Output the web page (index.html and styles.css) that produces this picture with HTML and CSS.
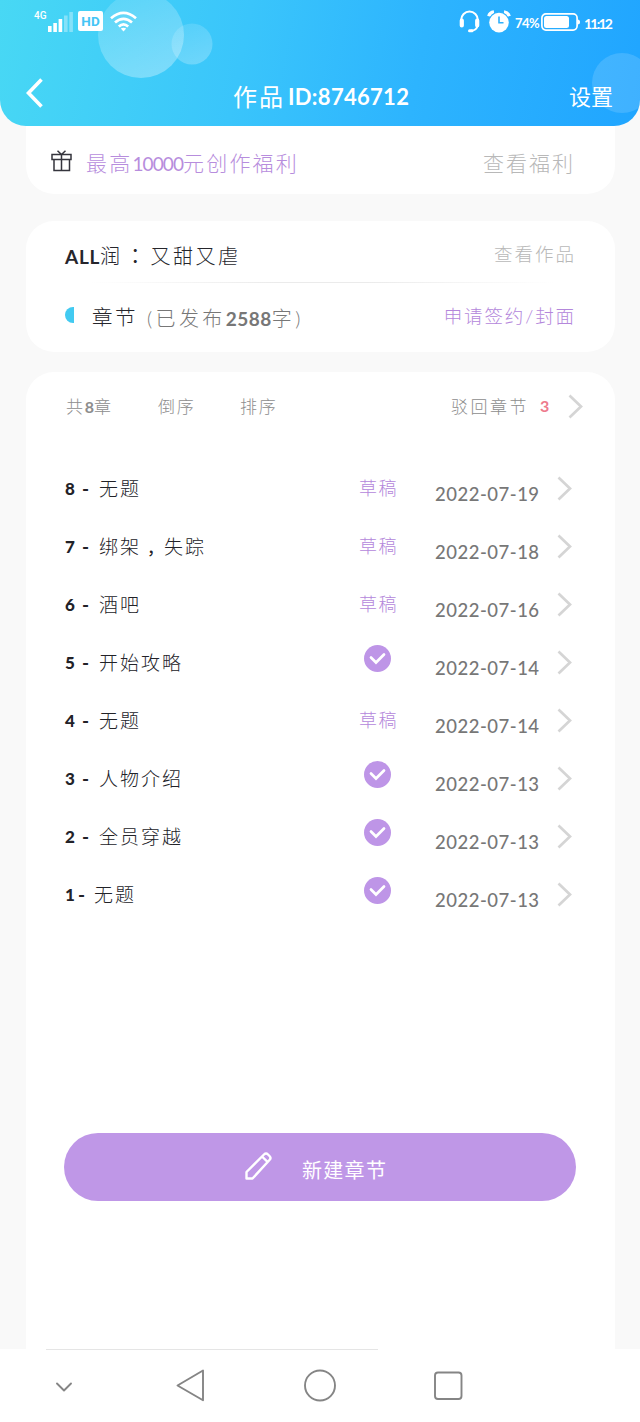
FILE: index.html
```html
<!DOCTYPE html>
<html lang="zh-CN">
<head>
<meta charset="utf-8">
<title>作品</title>
<link rel="stylesheet" href="styles.css">
</head>
<body>
<div class="screen">
  <header class="header">
    <svg class="bubbles" width="640" height="126" viewBox="0 0 640 126">
      <defs>
        <linearGradient id="bubble" x1="0.2" y1="0" x2="0.6" y2="1">
          <stop offset="0" stop-color="#fff" stop-opacity=".13"/>
          <stop offset="1" stop-color="#fff" stop-opacity=".32"/>
        </linearGradient>
        <linearGradient id="bubbleSoft" x1="0.2" y1="0" x2="0.6" y2="1">
          <stop offset="0" stop-color="#fff" stop-opacity=".12"/>
          <stop offset="1" stop-color="#fff" stop-opacity=".25"/>
        </linearGradient>
      </defs>
      <circle cx="141" cy="35" r="43" fill="url(#bubble)"/>
      <circle cx="192" cy="44" r="20.5" fill="url(#bubbleSoft)"/>
      <circle cx="622" cy="83" r="30" fill="#fff" fill-opacity=".14"/>
    </svg>
    <div class="status">
      <div class="status-left">
        <span class="net">4G</span>
        <svg class="signal" width="25" height="20" viewBox="0 0 25 20" fill="#fff">
          <rect x="0" y="14" width="3.6" height="6"/><rect x="5.3" y="11" width="3.6" height="9"/><rect x="10.6" y="7" width="3.6" height="13"/>
          <rect x="16" y="3.5" width="3.6" height="16.5" opacity=".35"/><rect x="21.3" y="0" width="3.6" height="20" opacity=".35"/>
        </svg>
        <span class="hd">HD</span>
        <svg class="wifi" width="27" height="21" viewBox="0 0 27 21" fill="none" stroke="#fff" stroke-width="2.7">
          <path d="M1 7.2Q13.5-3.6 26 7.2M5 11.6Q13.5 4 22 11.6M8.8 15.6Q13.5 11.3 18.2 15.6"/>
          <path d="M10.8 17.6Q13.5 15.8 16.2 17.6L13.5 20.6z" fill="#fff" stroke="none"/>
        </svg>
      </div>
      <div class="status-right">
        <svg width="21" height="23" viewBox="0 0 21 23" fill="none" stroke="#fff" stroke-width="2">
          <path d="M2.2 13V9.8a8.3 8.3 0 0 1 16.6 0V13M18.6 15c-.3 3.4-2.6 5.4-6.6 5.8"/>
          <path d="M2.8 10.5v5M18.2 10.5v5" stroke-width="4.2" stroke-linecap="round"/>
          <path d="M10.5 20.8h2.5" stroke-width="3" stroke-linecap="round"/>
        </svg>
        <svg class="alarm" width="24" height="23" viewBox="0 0 24 23">
          <path d="M1.8 6.2Q2.8 2.6 7 2M22.2 6.2Q21.2 2.6 17 2" stroke="#fff" stroke-width="3.4" fill="none"/>
          <circle cx="12" cy="12.3" r="10.6" fill="#2fb2fd"/>
          <circle cx="12" cy="12.6" r="9.8" fill="#fff"/>
          <path d="M12 6.5v6.3h4.5" fill="none" stroke="#2fb0fc" stroke-width="1.6"/>
        </svg>
        <span class="percent">74%</span>
        <svg class="battery" width="39" height="18" viewBox="0 0 39 18">
          <rect x=".9" y=".9" width="35.2" height="16.2" rx="4" fill="none" stroke="#fff" stroke-width="1.7"/>
          <rect x="3" y="3" width="25" height="12" rx="2.5" fill="#fff"/>
          <path d="M36.5 6.5q2.5 0 2.5 2.5t-2.5 2.5z" fill="#fff"/>
        </svg>
        <span class="clock">11:12</span>
      </div>
    </div>
    <div class="titlebar">
      <svg width="17" height="30" viewBox="0 0 17 30" fill="none" stroke="#fff" stroke-width="3.6"><path d="M15.5 1.5L2.5 15l13 13.5"/></svg>
      <h1 class="title"><span class="title-cn">作品</span><span class="title-id">ID:8746712</span></h1>
      <span class="settings">设置</span>
    </div>
  </header>

  <section class="card benefit">
    <svg class="gift" width="21" height="22" viewBox="0 0 21 22" fill="none" stroke="#35353d" stroke-width="1.5">
      <path d="M1 4.5h19v5H1zM3 9.5h15.5v11H3zM10.5 4.5v16M6.5.8l4 3.7 4-3.7"/>
    </svg>
    <span class="benefit-text">最高<span class="n">10000</span>元创作福利</span>
    <span class="benefit-link">查看福利</span>
  </section>

  <section class="card work">
    <div class="work-row">
      <span class="work-name"><span class="n">ALL</span>润<span class="colon">：</span>又甜又虐</span>
      <span class="work-link">查看作品</span>
    </div>
    <div class="divider"></div>
    <div class="work-row chapters">
      <span class="half"></span>
      <span class="chapter-label">章节</span>
      <span class="chapter-info">(已发布<span class="n">2588</span>字)</span>
      <span class="apply">申请签约/封面</span>
    </div>
  </section>

  <section class="card list">
    <div class="tools">
      <span class="total">共<b>8</b>章</span>
      <span class="reverse">倒序</span>
      <span class="sort">排序</span>
      <span class="rejected">驳回章节</span>
      <b class="rejected-count">3</b>
      <svg class="more" width="15" height="25" viewBox="0 0 15 25"><path d="M1.5 1.5l11.5 11-11.5 11"/></svg>
    </div>
    <div class="rows">
      <div class="row"><span class="name"><b>8</b><i>-</i>无题</span><span class="state">草稿</span><time>2022-07-19</time><svg class="go" viewBox="0 0 15 25"><path d="M1.5 1.5l11.5 11-11.5 11"/></svg></div>
      <div class="row"><span class="name"><b>7</b><i>-</i>绑架<span class="comma">，</span>失踪</span><span class="state">草稿</span><time>2022-07-18</time><svg class="go" viewBox="0 0 15 25"><path d="M1.5 1.5l11.5 11-11.5 11"/></svg></div>
      <div class="row"><span class="name"><b>6</b><i>-</i>酒吧</span><span class="state">草稿</span><time>2022-07-16</time><svg class="go" viewBox="0 0 15 25"><path d="M1.5 1.5l11.5 11-11.5 11"/></svg></div>
      <div class="row"><span class="name"><b>5</b><i>-</i>开始攻略</span><span class="state"><svg class="done" viewBox="0 0 27 27"><circle cx="13.5" cy="13.5" r="13.5"/><path d="M7 12.5l5 5 8-8"/></svg></span><time>2022-07-14</time><svg class="go" viewBox="0 0 15 25"><path d="M1.5 1.5l11.5 11-11.5 11"/></svg></div>
      <div class="row"><span class="name"><b>4</b><i>-</i>无题</span><span class="state">草稿</span><time>2022-07-14</time><svg class="go" viewBox="0 0 15 25"><path d="M1.5 1.5l11.5 11-11.5 11"/></svg></div>
      <div class="row"><span class="name"><b>3</b><i>-</i>人物介绍</span><span class="state"><svg class="done" viewBox="0 0 27 27"><circle cx="13.5" cy="13.5" r="13.5"/><path d="M7 12.5l5 5 8-8"/></svg></span><time>2022-07-13</time><svg class="go" viewBox="0 0 15 25"><path d="M1.5 1.5l11.5 11-11.5 11"/></svg></div>
      <div class="row"><span class="name"><b>2</b><i>-</i>全员穿越</span><span class="state"><svg class="done" viewBox="0 0 27 27"><circle cx="13.5" cy="13.5" r="13.5"/><path d="M7 12.5l5 5 8-8"/></svg></span><time>2022-07-13</time><svg class="go" viewBox="0 0 15 25"><path d="M1.5 1.5l11.5 11-11.5 11"/></svg></div>
      <div class="row"><span class="name"><b class="one">1</b><i>-</i>无题</span><span class="state"><svg class="done" viewBox="0 0 27 27"><circle cx="13.5" cy="13.5" r="13.5"/><path d="M7 12.5l5 5 8-8"/></svg></span><time>2022-07-13</time><svg class="go" viewBox="0 0 15 25"><path d="M1.5 1.5l11.5 11-11.5 11"/></svg></div>
    </div>
    <div class="create">
      <svg width="27" height="28" viewBox="0 0 27 28" fill="none" stroke="#fff" stroke-width="2.4" stroke-linejoin="round">
        <path d="M1.5 26.5V20L19 2.5q2-2 4 0l1.5 1.5q2 2 0 4L7.5 26.5zM17 4.5l6 5.8"/>
      </svg>
      <span class="create-text">新建章节</span>
    </div>
  </section>

  <nav class="nav">
    <div class="nav-line"></div>
    <svg width="640" height="72" viewBox="0 0 640 72" fill="none" stroke="#858585" stroke-width="1.9" stroke-linejoin="round" stroke-linecap="round">
      <path d="M57 33.5l7 7 7-7"/>
      <path d="M177.500 35.500L203 20.500v29.800z"/>
      <circle cx="320" cy="35.5" r="15"/>
      <rect x="435" y="22.5" width="26.5" height="26.5" rx="3"/>
    </svg>
  </nav>
</div>
</body>
</html>
```

FILE: styles.css
```css
* { box-sizing: border-box; }
body { margin: 0; font-family: Lato, "Noto Sans CJK SC", sans-serif; font-weight: 300; line-height: 1; white-space: nowrap; }
svg { display: block; flex: none; }
i { font-style: normal; }
.screen { width: 640px; height: 1422px; background: #f9f9f9; display: flex; flex-direction: column; overflow: hidden; }

.header { position: relative; height: 126px; flex: none; border-radius: 0 0 26px 26px; overflow: hidden; color: #fff; background: linear-gradient(101deg, #48d8f4 0%, #3ac5fb 38%, #2db4fe 65%, #20a5ff 100%); }
.bubbles { position: absolute; left: 0; top: 0; }
.status { position: relative; height: 44px; display: flex; justify-content: space-between; padding: 0 28px 0 34px; }
.status-left { display: flex; align-items: flex-start; padding-top: 11px; }
.net { font: 500 10px/10px Roboto, sans-serif; width: 14px; }
.signal { margin-top: 1px; }
.hd { margin: 0 7px 0 5px; width: 25px; height: 20px; border-radius: 2px; background: #fff; color: #45c5f5; font: bold 13.5px/20px Roboto, sans-serif; text-align: center; }
.status-right { display: flex; align-items: center; padding-bottom: 1px; }
.alarm { margin-left: 7px; }
.percent { width: 27px; margin-left: 4px; padding-top: 4px; font-size: 13px; font-weight: 700; letter-spacing: -.6px; }
.battery { margin-left: -1px; }
.clock { width: 28px; margin-left: 4px; padding-top: 4px; font-size: 14px; font-weight: 700; letter-spacing: -1.8px; }
.titlebar { position: relative; height: 60px; display: flex; align-items: center; padding: 0 26px; margin-top: 18px; }
.titlebar > svg { margin-top: 2px; }
.title { margin: 10px 0 0 190px; width: 336px; display: flex; align-items: center; font-size: 24px; font-weight: 400; }
.title-cn { width: 55px; letter-spacing: 2px; }
.title-id { font-weight: 700; font-size: 22px; letter-spacing: .3px; }
.settings { font-size: 22px; margin: 9px 0 0 0; font-weight: 400; }

.card { background: #fff; margin: 0 25px 0 26px; flex: none; }
.benefit { height: 68px; border-radius: 0 0 28px 28px; display: flex; align-items: center; padding: 5px 40px 0 25px; }
.gift { margin-top: -4px; }
.benefit-text { margin: 0 auto 0 14px; font-size: 21px; letter-spacing: 2.2px; color: #b78ddd; }
.benefit-text .n { font-size: 19px; font-weight: 400; letter-spacing: -.9px; }
.benefit-link { font-size: 21px; letter-spacing: 2px; color: #b8b8b8; }

.work { margin-top: 27px; height: 131px; border-radius: 28px; }
.work-row { height: 61px; display: flex; align-items: center; padding: 8px 40px 0 39px; }
.work-name { margin-right: auto; font-size: 20px; letter-spacing: 2.5px; color: #26262c; }
.work-name .n { font-size: 19px; font-weight: 700; letter-spacing: .7px; }
.colon { display: inline-block; width: 28px; text-align: center; font-family: "Noto Sans CJK TC", sans-serif; font-weight: 400; }
.work-link { font-size: 18.5px; letter-spacing: 2px; margin: -3px -1px 0 0; color: #b8b8b8; }
.divider { height: 1px; margin: 0 60px 0 64px; background: linear-gradient(90deg, transparent, #ebebeb 40%, #ebebeb 60%, transparent); }
.half { width: 9px; height: 16px; margin: -6px 18px 0 0; border-radius: 9px 0 0 9px; background: #42caf1; }
.chapter-label { font-size: 20.5px; letter-spacing: 2.5px; color: #26262c; width: 55px; }
.chapter-info { font-size: 20px; letter-spacing: 3.4px; color: #777; margin-right: auto; }
.chapter-info .n { font-size: 19px; font-weight: 700; letter-spacing: .5px; }
.apply { font-size: 18.5px; letter-spacing: 1.9px; margin: -2px -1px 0 0; color: #b487db; }

.list { margin-top: 20px; height: 977px; border-radius: 28px 28px 0 0; }
.tools { height: 68px; display: flex; align-items: center; padding-left: 40px; font-size: 17px; letter-spacing: 1.7px; color: #8d8d8d; }
.tools b { font-weight: 700; letter-spacing: 0; font-size: 16px; }
.total { width: 92px; }
.reverse { width: 82px; }
.sort { width: 211px; }
.rejected { width: 89px; letter-spacing: 2.5px; }
.tools .rejected-count { width: 28px; color: #ee7b8d; }
.more path, .go path { fill: none; stroke: #d5d5d5; stroke-width: 2.7; }
.rows { margin-top: 19px; }
.row { height: 58px; display: flex; align-items: center; padding-left: 39px; color: #222228; }
.name { width: 287px; display: flex; align-items: center; font-size: 19px; letter-spacing: 2px; padding-top: 1px; }
.name b { width: 17px; font-size: 17px; font-weight: 900; letter-spacing: 0; }
.name .one { width: 13px; }
.name i { width: 17px; font-size: 19px; font-weight: 700; letter-spacing: 0; }
.name .one + i { width: 16px; }
.comma { width: 23px; padding: 3px 0 0 6px; font-size: 16px; font-weight: 500; letter-spacing: 0; }
.state { width: 52px; display: flex; justify-content: center; font-size: 18px; letter-spacing: 1.5px; color: #b487db; padding-left: 1px; }
.done { width: 27px; height: 27px; margin: -7px 2px 0 0; }
.done circle { fill: #be95e7; }
.done path { fill: none; stroke: #fff; stroke-width: 2.7; stroke-linecap: round; }
time { width: 122px; margin-left: 31px; padding-top: 13px; font-size: 18.5px; font-weight: 500; letter-spacing: .5px; color: #777; }
.go { width: 15px; height: 25px; }
.create { margin: 210px 39px 0 38px; height: 68px; border-radius: 34px; background: #bf97e7; color: #fff; display: flex; align-items: center; padding-left: 181px; }
.create > svg { margin-top: -2px; }
.create-text { margin: 5px 0 0 30px; font-size: 20px; letter-spacing: 1.3px; font-weight: 400; }

.nav { height: 73px; background: #fff; flex: none; }
.nav-line { height: 1px; width: 332px; margin-left: 46px; background: #e5e5e5; }
```
